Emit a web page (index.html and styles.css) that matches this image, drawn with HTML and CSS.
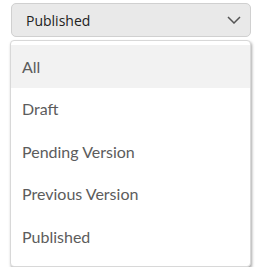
FILE: index.html
```html
<!DOCTYPE html>
<html lang="en">
<head>
    <meta charset="UTF-8">
    <meta name="viewport" content="width=device-width, initial-scale=1.0">
    <title>Status Filter</title>
    <link rel="stylesheet" href="styles.css">
</head>
<body>
    <div class="filter">
        <div class="select-box">
            <span class="select-value">Published</span>
            <svg class="chevron" width="14" height="8" viewBox="0 0 14 8">
                <path d="M1 1 L7 7 L13 1" fill="none" stroke="#555" stroke-width="1.5"/>
            </svg>
        </div>
        <ul class="options">
            <li class="active">All</li>
            <li>Draft</li>
            <li>Pending Version</li>
            <li>Previous Version</li>
            <li>Published</li>
        </ul>
    </div>
</body>
</html>
```

FILE: styles.css
```css
body {
    margin: 0;
    padding: 3px 5px 0 11px;
    background-color: #fff;
    font-family: Lato, "Open Sans", sans-serif;
}

.select-box {
    width: 240px;
    height: 34px;
    box-sizing: border-box;
    background-color: #e9e9e9;
    border: 1px solid #d0d0d0;
    border-radius: 5px;
    display: flex;
    align-items: center;
    justify-content: space-between;
    padding: 0 9px 0 14px;
}

.select-value {
    font-family: "Open Sans", sans-serif;
    font-size: 14px;
    color: #222;
}

.chevron {
    display: block;
}

.options {
    list-style-type: none;
    margin: 3px 0 0 -1px;
    padding: 4px 0 8px 0;
    width: 241px;
    box-sizing: border-box;
    background-color: #fff;
    border: 1px solid #d8d8d8;
    border-radius: 4px;
    box-shadow: 1px 2px 3px rgba(0, 0, 0, 0.35);
}

.options li {
    height: 42.5px;
    display: flex;
    align-items: center;
    padding-left: 11px;
    font-size: 16px;
    color: #5c5c5c;
}

.options li.active {
    background-color: #f2f2f2;
}
```
